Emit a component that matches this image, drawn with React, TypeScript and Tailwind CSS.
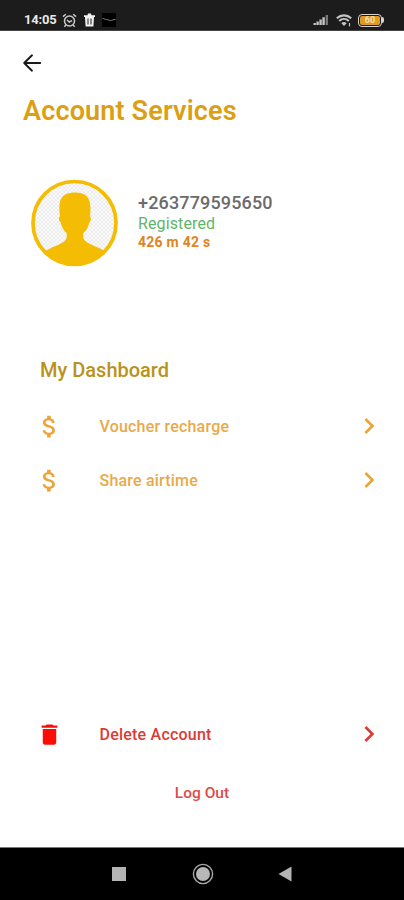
import { MdAttachMoney, MdChevronRight, MdDelete } from "react-icons/md";

function StatusBar() {
  return (
    <header className="h-[31px] shrink-0 bg-[#1c1c1c] border-b border-[#444] flex items-start justify-between pt-[10px] pl-[24px] pr-[20px] text-[#e8e8e8]">
      <div className="flex items-center h-5">
        <span className="w-[32px] text-[13px] leading-5 font-bold tracking-[-0.2px] whitespace-nowrap">14:05</span>
        <svg className="ml-[6px]" width="15" height="15" viewBox="0 0 15 15" fill="none" stroke="#c9c9c9" strokeWidth="1.5">
          <circle cx="7.5" cy="8" r="5" />
          <path d="M1 3.6 3.8 1.2M14 3.6 11.2 1.2M3.8 12 2.4 13.8M11.2 12l1.4 1.8M5 7l2.3 2L10 7.6" />
        </svg>
        <svg className="ml-[6px]" width="13" height="14" viewBox="0 0 13 14">
          <path d="M1 2.2h3.5L5 .6h3l.5 1.6H12V4H1zM2 4h9l-.6 9.4H2.6z" fill="#f2f2f2" />
          <path d="M5 5.5v6M8 5.5v6" stroke="#333" strokeWidth="1.1" />
        </svg>
        <span className="ml-[6px] w-[14px] h-[14px] bg-black">
          <svg width="14" height="14" viewBox="0 0 14 14" fill="none" stroke="#8a8a8a" strokeWidth="1">
            <path d="M.5 5.5c2 0 2 1 4 1s2 1 4 1 2-1 5-1" />
          </svg>
        </span>
      </div>

      <div className="flex items-center h-5">
        <svg width="16" height="12" viewBox="0 0 16 12">
          <path d="M.5 9h2.4v2H.5zM3.4 7.5h2.4V11H3.4zM6.4 5.5h2.4V11H6.4zM9.4 3.2h2.4V11H9.4z" fill="#c4c4c4" />
          <path d="M12.6 1H15v10h-2.4z" fill="#777" />
        </svg>
        <svg className="ml-[7px]" width="16" height="13" viewBox="0 0 16 13" fill="none" stroke="#c4c4c4" strokeWidth="2.1">
          <path d="M.8 4.2c4.2-3.8 10.2-3.8 14.4 0M3.2 7c2.8-2.6 6.8-2.6 9.6 0" />
          <path d="M5.3 9.2c1.6-1.5 3.8-1.5 5.4 0L8 12z" fill="#c4c4c4" stroke="none" />
          <path d="M13.5 9v3.4" strokeWidth="1.2" />
        </svg>
        <span className="ml-[6px] w-[24px] h-[13px] rounded-[4px] border-[1.5px] border-[#d4d4d4] p-[1px] flex">
          <span className="flex-1 rounded-[2px] bg-[#e09a22] text-[9px] leading-[9px] font-bold text-[#f5dfb4] text-center">60</span>
        </span>
        <span className="w-[2px] h-[6px] rounded-r-sm bg-[#d4d4d4]" />
      </div>
    </header>
  );
}

function Avatar() {
  return (
    <svg className="shrink-0" width="88" height="88" viewBox="0 0 88 88">
      <defs>
        <pattern id="checks" width="4" height="4" patternUnits="userSpaceOnUse">
          <rect width="4" height="4" fill="#fbfbfb" />
          <path d="M0 0h2v2H0zM2 2h2v2H2z" fill="#ececec" />
        </pattern>
        <clipPath id="disc">
          <circle cx="43.5" cy="44" r="42" />
        </clipPath>
      </defs>
      <circle cx="43.5" cy="44" r="41.5" fill="url(#checks)" />
      <path
        clipPath="url(#disc)"
        fill="#f4bd04"
        d="M29.5 43C27.500 42 27.500 38.500 29 37.500C27 22 29 13.500 44 13.500C57 13.500 61 20 59 37.500C60.500 39 60 42 58.500 43C57.500 48 55 52 52.300 54V59C53.500 64 65 67 73 71.500L83 79V88H4V79L15 71.500C23 67 34.500 64 35.700 59V54C33 52 30.500 48 29.500 43Z"
      />
      <circle cx="43.5" cy="44" r="41.5" fill="none" stroke="#f4bd04" strokeWidth="3.7" />
    </svg>
  );
}

function ServiceRow({ label }: { label: string }) {
  return (
    <button className="w-full h-[54px] flex items-center pl-[35px] pr-[19px] text-[#eda33b]">
      <MdAttachMoney size={29} />
      <span className="ml-[35.5px] pt-px flex-1 text-left text-[16px] font-medium tracking-[0.2px] text-[#e9a94a]">{label}</span>
      <MdChevronRight size={32} />
    </button>
  );
}

export default function App() {
  return (
    <div className="w-[404px] h-[900px] overflow-hidden flex flex-col bg-white font-['Roboto',sans-serif]">
      <StatusBar />

      <main className="flex-1 flex flex-col">
        <button className="mt-[22px] ml-[22px] w-5 h-5" aria-label="Back">
          <svg width="20" height="20" viewBox="0 0 20 20" fill="none" stroke="#1a1a1a" strokeWidth="1.9" strokeLinecap="round" strokeLinejoin="round">
            <path d="M10 2.3 2.2 10l7.8 7.7M2.4 10h15.8" />
          </svg>
        </button>

        <h1 className="mt-[20px] ml-[23px] h-9 text-[27px] leading-9 font-semibold tracking-[0.15px] text-[#dc9f14]">Account Services</h1>

        <section className="mt-[50px] ml-[31px] h-[88px] flex">
          <Avatar />
          <div className="ml-[18px] pt-[13px] whitespace-nowrap">
            <p className="h-[22px] pl-px text-[18px] leading-[22px] font-medium tracking-[0.15px] text-[#6b6b6b]">+263779595650</p>
            <p className="h-[19px] pl-px text-[16px] leading-[20px] tracking-[0.12px] text-[#5fb56a]">Registered</p>
            <p className="h-[17px] pl-px text-[14px] leading-[18px] font-bold tracking-[0.25px] text-[#df8420]">426 m 42 s</p>
          </div>
        </section>

        <h2 className="mt-[89px] ml-[40px] h-[28px] text-[20px] leading-7 font-medium text-[#b9921a]">My Dashboard</h2>
        <nav className="mt-[15px]">
          <ServiceRow label="Voucher recharge" />
          <ServiceRow label="Share airtime" />
        </nav>

        <button className="mt-[200px] w-full h-[54px] flex items-center pl-[36px] pr-[19px] text-[#dd3a33]">
          <MdDelete size={27} color="#fb0d05" />
          <span className="ml-[36.5px] pt-px flex-1 text-left text-[16px] font-medium tracking-[0.22px]">Delete Account</span>
          <MdChevronRight size={32} />
        </button>
        <button className="mt-[20px] h-6 self-center text-[15.5px] leading-6 font-medium text-[#dc4a4c]">Log Out</button>
      </main>

      <footer className="h-[53px] shrink-0 bg-black border-t border-[#777] flex items-center justify-center">
        <span className="w-[14px] h-[14px] bg-[#b4b4b4]" />
        <svg className="ml-[66px]" width="22" height="22" viewBox="0 0 22 22">
          <circle cx="11" cy="11" r="9.6" fill="none" stroke="#a9a9a9" strokeWidth="1.4" />
          <circle cx="11" cy="11" r="7" fill="#b8b8b8" />
        </svg>
        <svg className="mr-px ml-[64px]" width="14" height="16" viewBox="0 0 14 16">
          <path d="M13.5.5v15L.5 8z" fill="#b4b4b4" />
        </svg>
      </footer>
    </div>
  );
}
